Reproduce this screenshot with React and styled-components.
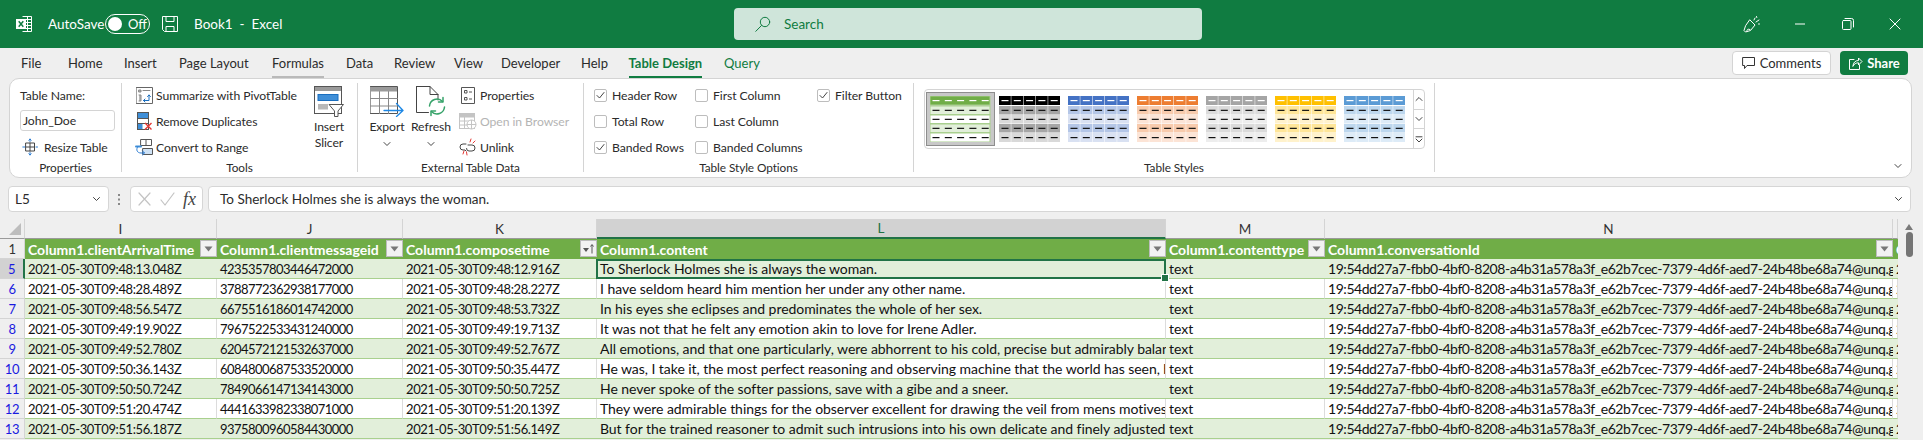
import React from "react";
import styled, { createGlobalStyle } from "styled-components";

const Global = createGlobalStyle`
  html, body { margin: 0; padding: 0; background: #efefef; }
  * { box-sizing: border-box; }
`;
const UI = `Lato, "Noto Sans", sans-serif`;
const CELL = `Lato, "Noto Sans", sans-serif`;

const Page = styled.div`
  width: 1923px; height: 440px; overflow: hidden; background: #efefef;
  font-family: ${UI}; font-size: 13px; letter-spacing: 0; color: #2b2b2b;
  display: flex; flex-direction: column;
`;
const TitleBar = styled.header`
  height: 48px; flex: none; background: #107c41; color: #fff; display: flex; align-items: center;
`;
const TitleLeft = styled.div`
  width: 734px; flex: none; display: flex; align-items: center; padding-left: 16px; font-size: 13.5px;
`;
const IconSlot = styled.span`
  display: inline-flex; flex: none; align-items: center; justify-content: center; line-height: 0;
  width: ${p => p.$w || 16}px; margin-right: ${p => p.$mr || 0}px;
`;
const AutoLabel = styled.span`width: 57px; flex: none;`;
const Toggle = styled.div`
  width: 45px; height: 20px; border: 1px solid #fff; border-radius: 10px; display: flex; align-items: center;
  padding-left: 2px; gap: 6px; font-size: 13px; margin-right: 12px;
`;
const Knob = styled.span`width: 14px; height: 14px; border-radius: 50%; background: #fff; flex: none;`;
const BookName = styled.span`white-space: pre; margin-left: 16px;`;
const SearchBox = styled.div`
  width: 468px; height: 32px; flex: none; background: #cfe5da; border-radius: 4px; color: #107c41; font-size: 13.5px;
  display: flex; align-items: center; padding-left: 21px; gap: 13px;
`;
const WindowButtons = styled.div`flex: 1; display: flex; justify-content: flex-end; padding-right: 4px;`;
const WindowButton = styled.div`width: 47.6px; height: 48px; display: flex; align-items: center; justify-content: center;`;

const TabRow = styled.nav`height: 30px; flex: none; display: flex; align-items: center; padding-left: 21px; padding-right: 15px;`;
const Tab = styled.div`width: ${p => p.$w}px; flex: none; height: 30px; display: flex; align-items: center;
  color: ${p => (p.$green ? "#107c41" : "#2b2b2b")}; font-weight: ${p => (p.$bold ? 700 : 400)};`;
const TabText = styled.span`
  position: relative; display: inline-block; white-space: nowrap;
  &::after { content: ""; display: ${p => (p.$line ? "block" : "none")}; position: absolute; left: 0; right: 0; bottom: -7px; height: 2px;
    background: ${p => p.$line}; }
`;
const TabSpacer = styled.div`flex: 1;`;
const Comments = styled.div`
  width: 99px; height: 24px; background: #fff; border: 1px solid #d4d4d4; border-radius: 4px; margin-right: 9px;
  display: flex; align-items: center; justify-content: center; gap: 4px;
`;
const Share = styled.div`
  width: 68px; height: 24px; background: #107c41; color: #fff; border-radius: 4px; font-weight: 700;
  display: flex; align-items: center; justify-content: center; gap: 4px;
`;

const Ribbon = styled.section`
  height: 100px; flex: none; width: 1903px; margin-left: 9px; background: #fff; border: 1px solid #d4d4d4; border-radius: 10px;
  display: flex; padding-top: 4px; font-size: 12.2px; letter-spacing: -0.07px;
`;
const Group = styled.div`
  width: ${p => p.$w}px; flex: ${p => (p.$w ? "none" : 1)}; height: 89px; display: flex; flex-direction: column;
  border-right: ${p => (p.$last ? "none" : "1px solid #d4d4d4")};
`;
const GroupBody = styled.div`flex: 1; min-height: 0; display: flex; padding-left: ${p => p.$pl || 0}px;`;
const GroupLabel = styled.div`height: 8px; flex: none; line-height: 8px; font-size: 11.8px; text-align: center;`;
const Stack = styled.div`
  display: flex; flex-direction: column; width: ${p => p.$w ? p.$w + "px" : "auto"}; flex: none; margin-top: -1px; margin-left: ${p => p.$ml || 0}px;
`;
const Line = styled.div`
  height: 26px; flex: none; display: flex; align-items: center; white-space: nowrap; gap: ${p => p.$gap ?? 3}px;
  color: ${p => (p.$off ? "#b4b4b4" : "inherit")};
`;
const NameInput = styled.div`
  width: 95px; height: 21px; flex: none; border: 1px solid #d4d4d4; border-radius: 3px; padding-left: 2px; margin: 2px 0 3px;
  display: flex; align-items: center;
`;
const BigButton = styled.div`
  width: ${p => p.$w}px; flex: none; display: flex; flex-direction: column; align-items: center; padding-top: 3px; text-align: center;
`;
const BigIcon = styled.div`height: 31px; line-height: 0; display: flex; align-items: flex-end; margin-bottom: 2px;`;
const BigText = styled.div`line-height: 16px; white-space: nowrap;`;
const Check = styled.span`
  width: 13px; height: 13px; flex: none; border: 1px solid #bdbdbd; border-radius: 2px; background: #fff;
  display: inline-flex; align-items: center; justify-content: center; line-height: 0;
`;
const Gallery = styled.div`
  width: 501px; height: 60px; margin: 6px 0 0 10px; flex: none; border: 1.5px solid #d4d4d4; border-radius: 4px;
  display: flex; align-items: center; padding-left: 1px;
`;
const Selected = styled.div`
  width: 69px; height: 54px; flex: none; background: #c8c8c8; border: 1px solid #8d8d8d; display: flex; align-items: center; justify-content: center;
  margin-right: 3.5px; line-height: 0;
`;
const Thumb = styled.div`flex: none; margin-right: 8px; line-height: 0;`;
const GalleryButtons = styled.div`
  margin-left: auto; width: 14px; height: 100%; border-left: 1.5px solid #d4d4d4; display: flex; flex-direction: column;
`;
const GalleryButton = styled.div`
  flex: 1; display: flex; align-items: center; justify-content: center; line-height: 0;
  & + & { border-top: 1.5px solid #d4d4d4; }
`;
const Collapse = styled.div`flex: 1; display: flex; justify-content: flex-end; align-items: flex-end; padding: 0 8px 3px 0; line-height: 0;`;

const FormulaBar = styled.div`
  height: 26px; flex: none; margin-top: 8px; padding-left: 8px; display: flex; align-items: stretch;
`;
const FieldBox = styled.div`
  width: ${p => p.$w ? p.$w + "px" : "auto"}; flex: ${p => (p.$w ? "none" : 1)}; background: #fff; border: 1px solid #d6d6d6; border-radius: 4px;
  display: flex; align-items: center; padding: 0 6px 0 ${p => p.$pl || 6}px; margin-left: ${p => p.$ml || 0}px; margin-right: ${p => p.$mr || 0}px;
  font-size: 13.5px;
`;
const Dots = styled.div`width: 21px; flex: none; display: flex; align-items: center; justify-content: center; line-height: 0;`;
const Fx = styled.span`
  margin-left: auto; font-family: "Liberation Serif", serif; font-style: italic; font-size: 18px; font-weight: 400; color: #444;
`;
const Pushed = styled.span`margin-left: auto; line-height: 0; display: inline-flex;`;

const Sheet = styled.div`flex: none; margin-top: 7px; display: flex; font-family: ${CELL}; font-size: 14px; letter-spacing: 0; color: #111;`;
const Table = styled.div`
  width: 1898px; flex: none; display: grid; grid-template-columns: 25px 192px 186px 194px 569px 159px 568px 5px; grid-auto-rows: 20px; overflow: hidden;
`;
const ColHead = styled.div`
  background: ${p => (p.$on ? "#d2d2d2" : "#efefef")}; color: ${p => (p.$on ? "#217346" : "#333")};
  border-right: 1px solid #d4d4d4; border-bottom: ${p => (p.$on ? "2px solid #217346" : "1px solid #9a9a9a")};
  display: flex; align-items: center; justify-content: center; font-size: 13.5px;
`;
const Corner = styled.div`
  background: #efefef; border-right: 1px solid #d4d4d4; border-bottom: 1px solid #9a9a9a; display: flex; align-items: flex-end; justify-content: flex-end; padding: 0 3px 3px 0;
`;
const CornerMark = styled.span`width: 0; height: 0; border-left: 12px solid transparent; border-bottom: 12px solid #bdbdbd;`;
const RowHead = styled.div`
  background: ${p => (p.$on ? "#d2d2d2" : "#efefef")}; color: ${p => p.$c};
  border-right: ${p => (p.$on ? "2px solid #217346" : "1px solid #d4d4d4")}; border-bottom: 1px solid #d4d4d4;
  display: flex; align-items: center; justify-content: center; font-size: 13px; letter-spacing: -0.4px;
`;
const HeadCell = styled.div`
  position: relative; background: #70ad47; color: #fff; font-weight: 700; padding-left: 3px; display: flex; align-items: center; overflow: hidden; white-space: nowrap;
`;
const FilterBtn = styled.span`
  position: absolute; right: 0; top: 1px; width: 17px; height: 17px; background: #f2f2f2; border: 1px solid #bcbcbc;
  display: flex; align-items: center; justify-content: center; line-height: 0;
`;
const Cell = styled.div`
  position: relative; background: ${p => (p.$band ? "#e2efda" : "#fff")}; border-bottom: 1px solid #a9d08e;
  border-right: ${p => (p.$band ? "none" : "1px solid #dcdcdc")};
  padding-left: 3px; display: flex; align-items: center; overflow: hidden; white-space: nowrap;
  font-size: ${p => p.$fs || 14}px; letter-spacing: ${p => p.$ls || 0}px;
`;
const ActiveBox = styled.span`
  position: absolute; inset: 0 0 -1px -1px; border: 2px solid #217346; pointer-events: none;
`;
const ActiveWrap = styled(Cell)`overflow: visible; z-index: 2;`;
const Handle = styled.span`
  position: absolute; right: -3px; bottom: -4px; width: 6px; height: 6px; background: #217346; border: 1px solid #fff; box-sizing: content-box; z-index: 3;
`;
const ScrollTrack = styled.div`width: 25px; flex: none; display: flex; flex-direction: column; align-items: center; padding-top: 5px;`;
const ScrollArrow = styled.span`width: 0; height: 0; border-left: 4px solid transparent; border-right: 4px solid transparent; border-bottom: 6px solid #7a7a7a; margin-left: -3px;`;
const ScrollThumb = styled.span`width: 7px; height: 25px; background: #757575; border-radius: 4px; margin-top: 2px; margin-left: -3px;`;

const s = { fill: "none", strokeLinecap: "round", strokeLinejoin: "round" };

const ExcelLogo = () => (
  <svg width="16" height="16" viewBox="0 0 16 16">
    <path d="M6.5.5h9v15h-9M6.5 3.5h9M9 6.5h6.5M9 9.5h6.5M9 12.5h6.5M11.5.5v15" fill="none" stroke="#fff" />
    <rect x="0" y="3" width="10" height="10" fill="#fff" />
    <path d="M2.7 5.3l4.6 5.4M7.3 5.3l-4.6 5.4" stroke="#107c41" strokeWidth="1.5" />
  </svg>
);
const SaveIcon = () => (
  <svg width="16" height="16" viewBox="0 0 16 16" {...s} stroke="#fff">
    <path d="M.5.5h15v15h-13l-2-2zM4 .5v5h8v-5M4 15.5v-5h8v5" strokeLinecap="butt" />
  </svg>
);
const SearchIcon = () => (
  <svg width="16" height="16" viewBox="0 0 16 16" {...s} stroke="#107c41">
    <circle cx="10" cy="6" r="4.7" /><path d="M6.5 9.5L.8 15.3" />
  </svg>
);
const PenIcon = () => (
  <svg width="18" height="18" viewBox="0 0 18 18" {...s} stroke="#fff">
    <path d="M7 5l5 5-4.5 5.5-5 1.5-1.5-1.5L2.500 11zM4 16.500c-.5-2 1-3 3-2M11 5l1-2M13 7l3-2M13.500 1.500l.3 1M15.500 9h1" />
  </svg>
);
const MinIcon = () => <svg width="12" height="12" viewBox="0 0 12 12"><path d="M1 6h10" stroke="#fff" /></svg>;
const RestoreIcon = () => (
  <svg width="12" height="12" viewBox="0 0 12 12" {...s} stroke="#fff"><rect x=".5" y="2.500" width="8.500" height="9" rx="1" /><path d="M3 .5h6.500a2 2 0 0 1 2 2V9" /></svg>
);
const CloseIcon = () => <svg width="12" height="12" viewBox="0 0 12 12"><path d="M.7.7l10.600 10.600M11.300.7L.7 11.300" stroke="#fff" /></svg>;
const CommentIcon = () => (
  <svg width="14" height="14" viewBox="0 0 14 14" {...s} stroke="#333"><path d="M1 1.500h11.500v8H5L2.500 12.500v-3H1z" /></svg>
);
const ShareIcon = () => (
  <svg width="15" height="15" viewBox="0 0 15 15" {...s} stroke="#fff"><path d="M6 3.500H1.500v10h10V9M5 10c0-3.500 2.500-5.500 5.500-5.500V2l3.500 3.500L10.500 9V6.800C8 6.800 6 8 5 10z" /></svg>
);
const ResizeIcon = () => (
  <svg width="16" height="18" viewBox="0 0 16 18" {...s}>
    <rect x="4" y="5" width="8.500" height="8" stroke="#444" /><path d="M4 9h8.500M8 5v8" stroke="#444" />
    <path d="M8 1v2.500M6.800 2.200L8 1l1.200 1.200M8 17v-2.500M6.800 15.800L8 17l1.200-1.200M.8 9h2M14 9h1.500" stroke="#2b7cd3" />
  </svg>
);
const PivotIcon = () => (
  <svg width="17" height="17" viewBox="0 0 17 17" {...s}>
    <rect x=".5" y=".5" width="16" height="16" stroke="#666" />
    <path d="M3 3h2v2H3zM7 3.500h7M3 8h2v6H3" stroke="#888" fill="#b8b8b8" />
    <path d="M7.500 13.500h5.500V8M11.500 9.500L13 8l1.500 1.500M9 12l-1.500 1.500L9 15" stroke="#1a6fc0" />
  </svg>
);
const DupIcon = () => (
  <svg width="17" height="19" viewBox="0 0 17 19">
    <rect x="1.500" y=".5" width="11" height="17" fill="#fff" stroke="#555" />
    <rect x="2" y="1" width="10" height="5" fill="#3f8fd8" />
    <rect x="2" y="12" width="4.500" height="5" fill="#3f8fd8" />
    <path d="M1.500 6.500h11M1.500 11.500h11" stroke="#555" />
    <path d="M9 11l6.500 6.500M15.500 11L9 17.500" stroke="#e53935" strokeWidth="1.400" fill="none" />
  </svg>
);
const ConvertIcon = () => (
  <svg width="18" height="17" viewBox="0 0 18 17" {...s}>
    <rect x="6" y=".5" width="10.500" height="6" stroke="#555" /><path d="M11 .5v6" stroke="#555" />
    <path d="M1 7.500h5" stroke="#3f8fd8" strokeWidth="2" />
    <rect x="8" y="9.500" width="9.500" height="6" stroke="#555" fill="#cfe2f5" />
    <path d="M3 7.500c-2.500 3-1 6.500 3 6.500H9M7.500 12L9.500 14 7.500 16" stroke="#2b7cd3" />
  </svg>
);
const SlicerIcon = () => (
  <svg width="30" height="31" viewBox="0 0 30 31">
    <rect x=".5" y=".5" width="27" height="27" fill="#fff" stroke="#555" />
    <rect x="1" y="1" width="26" height="4" fill="#9a9a9a" />
    <rect x="4" y="8.500" width="20" height="6" fill="#3f8fd8" stroke="#1a6fc0" />
    <rect x="4" y="18" width="10" height="5.500" fill="#b8b8b8" />
    <path d="M15 18.500h14.500l-5.500 6.500v5.500h-3.500V25z" fill="#fff" stroke="#555" />
  </svg>
);
const ExportIcon = () => (
  <svg width="34" height="31" viewBox="0 0 34 31" {...s}>
    <rect x=".5" y=".5" width="27" height="27" stroke="#555" fill="#fff" />
    <rect x="1" y="1" width="26" height="4.500" fill="#9a9a9a" />
    <path d="M9.500 5.500v22M18.500 5.500v22M.5 12.500h27M.5 20h27" stroke="#888" />
    <path d="M14 24.500h18M26.500 17.500L33 24.500 26.500 30.500" stroke="#1e88e5" strokeWidth="1.300" fill="none" />
  </svg>
);
const RefreshIcon = () => (
  <svg width="30" height="31" viewBox="0 0 30 31" {...s}>
    <path d="M.5.5h13.500L22 8.500V14M14 .5v8h8M.5.5v26h12" stroke="#444" />
    <path d="M13.500 20a7.500 7.500 0 0 1 13-4.500M28.500 21a7.500 7.500 0 0 1-13 4.500" stroke="#36a269" strokeWidth="1.500" />
    <path d="M27 11.500v4.500h-4.500M15 29.500V25h4.500" stroke="#36a269" strokeWidth="1.500" />
  </svg>
);
const PropsIcon = () => (
  <svg width="14" height="17" viewBox="0 0 14 17" fill="none" stroke="#555">
    <path d="M.5.5h13v16H.5z" /><path d="M3.500 3.500h2.500v2.500H3.500zM3.500 10.500h2.500v2.500H3.500z" /><path d="M8 5h3M8 12h3" />
  </svg>
);
const BrowserIcon = () => (
  <svg width="18" height="17" viewBox="0 0 18 17" fill="none" stroke="#c4c4c4">
    <rect x=".5" y=".5" width="15" height="15" /><rect x="1" y="1" width="14" height="3" fill="#c4c4c4" /><path d="M.5 8h10M.5 12h8M5.500 4v11" />
    <circle cx="12.500" cy="11.500" r="4.500" fill="#fff" /><path d="M8 11.500h9M12.500 7v9" />
  </svg>
);
const UnlinkIcon = () => (
  <svg width="18" height="18" viewBox="0 0 18 18" {...s}>
    <path d="M7 6H4a3 3 0 0 0 0 6h2l1 1M9 7h4a3 3 0 0 1 3 3 3 3 0 0 1-3 3h-3a2.500 2.500 0 0 1-2.500-2.500" stroke="#444" />
    <path d="M11 4l1-3M14 5l2-2M4 16l1-3M8 17l-.5-3" stroke="#e53935" />
  </svg>
);
const Tick = () => (
  <svg width="9" height="9" viewBox="0 0 9 9" {...s} stroke="#444"><path d="M1 4.500l2.500 2.500L8 1.500" /></svg>
);
const Chev = ({ w = 8, d = "M1 1.500l3 3 3-3", c = "#444" }) => (
  <svg width={w} height="6" viewBox="0 0 8 6" {...s} stroke={c}><path d={d} /></svg>
);
const FilterMark = () => <svg width="9" height="6" viewBox="0 0 9 6"><path d="M.5.5h8L4.500 5.500z" fill="#777" /></svg>;
const SortMark = () => (
  <svg width="13" height="13" viewBox="0 0 13 13" fill="#555"><path d="M1 6h6L4 10z" /><path d="M10 11.500V3M8.500 4.500L10 2.500l1.500 2" stroke="#555" fill="none" /></svg>
);
const StyleThumb = ({ head, a, b, green }) => {
  const rows = [[0, 9], [10, 8.500], [19, 8.500], [28, 8.500], [37, 9]];
  const cols = green ? [0] : [0, 12.300, 24.600, 36.900, 49.200];
  return (
    <svg width="61" height="46" viewBox="0 0 61 46">
      {rows.map(([y, h], r) => {
        const fill = r === 0 ? head : r % 2 ? a : b;
        const dash = r === 0 ? "#fff" : "#111";
        return (
          <g key={r}>
            {cols.map(x => (
              <rect key={x} x={x} y={y} width={green ? 60 : 11.800} height={h}
                fill={fill} stroke={green ? "#a9d08e" : "none"} strokeWidth={green ? 1 : 0} />
            ))}
            {[2.500, 14.800, 27.100, 39.400, 51.700].map(x => (
              <rect key={x} x={x} y={y + h / 2 - 0.5} width="7" height="1.200" fill={dash} />
            ))}
          </g>
        );
      })}
    </svg>
  );
};

const tabs = [
  ["File", 47], ["Home", 56], ["Insert", 55], ["Page Layout", 93], ["Formulas", 74, "#b9b9b9"], ["Data", 48], ["Review", 60],
  ["View", 47], ["Developer", 80], ["Help", 47.500], ["Table Design", 95.500, "#107c41", true], ["Query", 60, null, false, true],
];
const thumbs = [
  ["#000", "#a6a6a6", "#d9d9d9"], ["#4472c4", "#b4c6e7", "#d9e1f2"], ["#ed7d31", "#f8cbad", "#fce4d6"],
  ["#a5a5a5", "#dbdbdb", "#ededed"], ["#ffc000", "#ffe699", "#fff2cc"], ["#5b9bd5", "#bdd7ee", "#ddebf7"],
];
const CONV = "19:54dd27a7-fbb0-4bf0-8208-a4b31a578a3f_e62b7cec-7379-4d6f-aed7-24b48be68a74@unq.gbl.spaces";
const rows = [
  [5, "2021-05-30T09:48:13.048Z", "4235357803446472000", "2021-05-30T09:48:12.916Z", "To Sherlock Holmes she is always the woman."],
  [6, "2021-05-30T09:48:28.489Z", "3788772362938177000", "2021-05-30T09:48:28.227Z", "I have seldom heard him mention her under any other name."],
  [7, "2021-05-30T09:48:56.547Z", "6675516186014742000", "2021-05-30T09:48:53.732Z", "In his eyes she eclipses and predominates the whole of her sex."],
  [8, "2021-05-30T09:49:19.902Z", "7967522533431240000", "2021-05-30T09:49:19.713Z", "It was not that he felt any emotion akin to love for Irene Adler."],
  [9, "2021-05-30T09:49:52.780Z", "6204572121532637000", "2021-05-30T09:49:52.767Z", "All emotions, and that one particularly, were abhorrent to his cold, precise but admirably balanced mind."],
  [10, "2021-05-30T09:50:36.143Z", "6084800687533520000", "2021-05-30T09:50:35.447Z", "He was, I take it, the most perfect reasoning and observing machine that the world has seen, but as a lover"],
  [11, "2021-05-30T09:50:50.724Z", "7849066147134143000", "2021-05-30T09:50:50.725Z", "He never spoke of the softer passions, save with a gibe and a sneer."],
  [12, "2021-05-30T09:51:20.474Z", "4441633982338071000", "2021-05-30T09:51:20.139Z", "They were admirable things for the observer excellent for drawing the veil from mens motives and actions."],
  [13, "2021-05-30T09:51:56.187Z", "9375800960584430000", "2021-05-30T09:51:56.149Z", "But for the trained reasoner to admit such intrusions into his own delicate and finely adjusted temperament"],
];
const heads = [
  ["Column1.clientArrivalTime"], ["Column1.clientmessageid"], ["Column1.composetime", true], ["Column1.content"],
  ["Column1.contenttype"], ["Column1.conversationId"],
];

export default function App() {
  return (
    <Page>
      <Global />
      <TitleBar>
        <TitleLeft>
          <IconSlot $mr={16}><ExcelLogo /></IconSlot>
          <AutoLabel>AutoSave</AutoLabel>
          <Toggle><Knob />Off</Toggle>
          <IconSlot><SaveIcon /></IconSlot>
          <BookName>Book1  -  Excel</BookName>
        </TitleLeft>
        <SearchBox><SearchIcon />Search</SearchBox>
        <WindowButtons>
          <WindowButton><PenIcon /></WindowButton>
          <WindowButton><MinIcon /></WindowButton>
          <WindowButton><RestoreIcon /></WindowButton>
          <WindowButton><CloseIcon /></WindowButton>
        </WindowButtons>
      </TitleBar>

      <TabRow>
        {tabs.map(([t, w, line, bold, green]) => (
          <Tab key={t} $w={w} $bold={bold} $green={bold || green}>
            <TabText $line={line}>{t}</TabText>
          </Tab>
        ))}
        <TabSpacer />
        <Comments><CommentIcon />Comments</Comments>
        <Share><ShareIcon />Share</Share>
      </TabRow>

      <Ribbon>
        <Group $w={112}>
          <GroupBody $pl={10}>
            <Stack>
              <Line>Table Name:</Line>
              <NameInput>John_Doe</NameInput>
              <Line $gap={4}><IconSlot $w={20}><ResizeIcon /></IconSlot>Resize Table</Line>
            </Stack>
          </GroupBody>
          <GroupLabel>Properties</GroupLabel>
        </Group>
        <Group $w={236}>
          <GroupBody $pl={13}>
            <Stack $w={169}>
              <Line><IconSlot $w={18}><PivotIcon /></IconSlot>Summarize with PivotTable</Line>
              <Line><IconSlot $w={18}><DupIcon /></IconSlot>Remove Duplicates</Line>
              <Line><IconSlot $w={18}><ConvertIcon /></IconSlot>Convert to Range</Line>
            </Stack>
            <BigButton $w={50}>
              <BigIcon><SlicerIcon /></BigIcon>
              <BigText>Insert</BigText>
              <BigText>Slicer</BigText>
            </BigButton>
          </GroupBody>
          <GroupLabel>Tools</GroupLabel>
        </Group>
        <Group $w={226}>
          <GroupBody $pl={7}>
            <BigButton $w={44}>
              <BigIcon><ExportIcon /></BigIcon>
              <BigText>Export</BigText>
              <BigText><Chev /></BigText>
            </BigButton>
            <BigButton $w={44}>
              <BigIcon><RefreshIcon /></BigIcon>
              <BigText>Refresh</BigText>
              <BigText><Chev /></BigText>
            </BigButton>
            <Stack $ml={6}>
              <Line $gap={3}><IconSlot $w={18} ><PropsIcon /></IconSlot>Properties</Line>
              <Line $gap={3} $off><IconSlot $w={18}><BrowserIcon /></IconSlot>Open in Browser</Line>
              <Line $gap={3}><IconSlot $w={18}><UnlinkIcon /></IconSlot>Unlink</Line>
            </Stack>
          </GroupBody>
          <GroupLabel>External Table Data</GroupLabel>
        </Group>
        <Group $w={330}>
          <GroupBody $pl={10}>
            <Stack $w={101}>
              <Line $gap={5}><Check><Tick /></Check>Header Row</Line>
              <Line $gap={5}><Check />Total Row</Line>
              <Line $gap={5}><Check><Tick /></Check>Banded Rows</Line>
            </Stack>
            <Stack $w={122}>
              <Line $gap={5}><Check />First Column</Line>
              <Line $gap={5}><Check />Last Column</Line>
              <Line $gap={5}><Check />Banded Columns</Line>
            </Stack>
            <Stack>
              <Line $gap={5}><Check><Tick /></Check>Filter Button</Line>
            </Stack>
          </GroupBody>
          <GroupLabel>Table Style Options</GroupLabel>
        </Group>
        <Group $w={521}>
          <GroupBody>
            <Gallery>
              <Selected><StyleThumb green head="#70ad47" a="#e2efda" b="#fff" /></Selected>
              {thumbs.map(([h, a, b]) => (
                <Thumb key={h}><StyleThumb head={h} a={a} b={b} /></Thumb>
              ))}
              <GalleryButtons>
                <GalleryButton><Chev d="M1 4.500l3-3 3 3" /></GalleryButton>
                <GalleryButton><Chev /></GalleryButton>
                <GalleryButton><Chev d="M1 .8h6M1 3l3 3 3-3" /></GalleryButton>
              </GalleryButtons>
            </Gallery>
          </GroupBody>
          <GroupLabel>Table Styles</GroupLabel>
        </Group>
        <Group $last>
          <Collapse><Chev w={10} /></Collapse>
        </Group>
      </Ribbon>

      <FormulaBar>
        <FieldBox $w={101}>L5<Pushed><Chev w={11} /></Pushed></FieldBox>
        <Dots>
          <svg width="3" height="11" viewBox="0 0 3 11" fill="#888"><rect y="0" width="2" height="2" /><rect y="4.500" width="2" height="2" /><rect y="9" width="2" height="2" /></svg>
        </Dots>
        <FieldBox $w={73}>
          <svg width="40" height="14" viewBox="0 0 40 14" {...s} stroke="#c4c4c4" strokeWidth="1.200">
            <path d="M2 1l11 12M13 1L2 13M24 8l4 5 9-12" />
          </svg>
          <Fx>fx</Fx>
        </FieldBox>
        <FieldBox $ml={5} $mr={12} $pl={11}>
          To Sherlock Holmes she is always the woman.
          <Pushed><Chev w={11} /></Pushed>
        </FieldBox>
      </FormulaBar>

      <Sheet>
        <Table>
          <Corner><CornerMark /></Corner>
          {["I", "J", "K", "L", "M", "N", ""].map(c => <ColHead key={c} $on={c === "L"}>{c}</ColHead>)}

          <RowHead $c="#333">1</RowHead>
          {heads.map(([t, sort]) => (
            <HeadCell key={t}>{t}<FilterBtn>{sort ? <SortMark /> : <FilterMark />}</FilterBtn></HeadCell>
          ))}
          <HeadCell>C</HeadCell>

          {rows.map(([n, a, b, c, d], i) => {
            const band = i % 2 === 0;
            return (
              <React.Fragment key={n}>
                <RowHead $c="#1a1ae0" $on={n === 5}>{n}</RowHead>
                <Cell $band={band} $fs={13} $ls={-0.4}>{a}</Cell>
                <Cell $band={band} $fs={13} $ls={-0.55}>{b}</Cell>
                <Cell $band={band} $fs={13} $ls={-0.4}>{c}</Cell>
                {n === 5 ? (
                  <ActiveWrap $band={band} $ls={-0.05}>{d}<ActiveBox /><Handle /></ActiveWrap>
                ) : (
                  <Cell $band={band} $ls={-0.05}>{d}</Cell>
                )}
                <Cell $band={band}>text</Cell>
                <Cell $band={band} $ls={-0.45}>{CONV}</Cell>
                <Cell $band={band}>2021</Cell>
              </React.Fragment>
            );
          })}
        </Table>
        <ScrollTrack><ScrollArrow /><ScrollThumb /></ScrollTrack>
      </Sheet>
    </Page>
  );
}
